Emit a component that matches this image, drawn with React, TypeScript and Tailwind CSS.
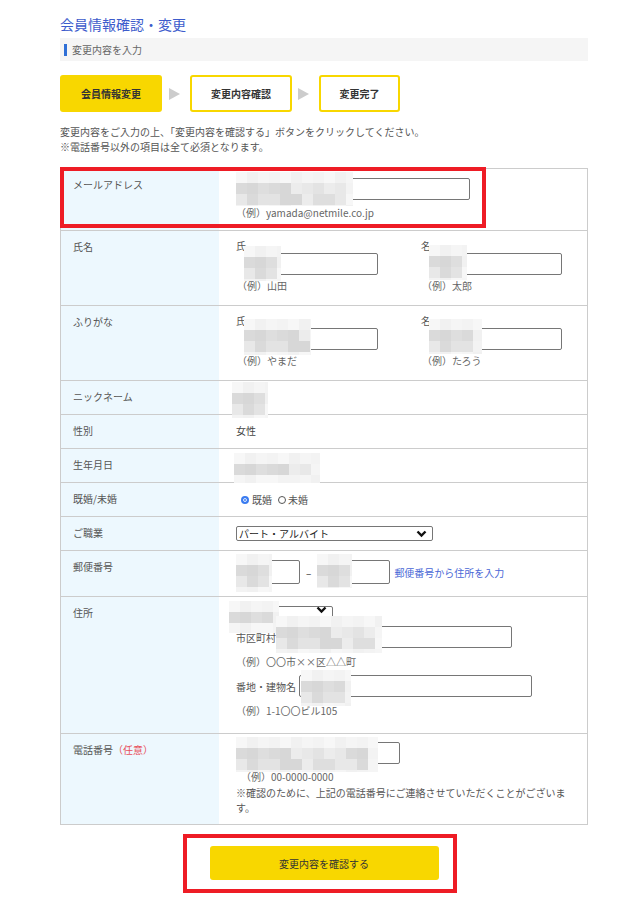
import React from "react";

const FONT = { fontFamily: '"Noto Sans CJK JP", "Noto Sans", sans-serif' };

// pixelated blur over personal values
function Mosaic({ w, h, className }: { w: number; h: number; className: string }) {
  const cell = 11;
  const cols = Math.ceil(w / cell);
  const rows = Math.ceil(h / cell);
  const light = ["#f7f7f7", "#f3f3f3", "#f5f5f5", "#f1f1f1"];
  const dark = ["#e3e3e3", "#dadada", "#e8e8e8", "#dedede", "#ececec", "#d7d7d7"];
  const rects = [];
  for (let r = 0; r < rows; r++) {
    for (let c = 0; c < cols; c++) {
      const mid = r > 0 && r < rows - 1 && c < cols - 1;
      const pal = mid ? dark : light;
      const fill = pal[(r * 7 + c * 3 + ((c * r) % 5)) % pal.length];
      rects.push(<rect key={r + "-" + c} x={c * cell} y={r * cell} width={cell} height={cell} fill={fill} />);
    }
  }
  return (
    <svg width={w} height={h} className={"absolute pointer-events-none " + className}>
      {rects}
    </svg>
  );
}

function Input({ className }: { className: string }) {
  return <div className={"border border-[#767676] rounded-[2px] bg-white " + className} />;
}

function Chevron() {
  return (
    <svg width="11" height="8" viewBox="0 0 11 8">
      <path d="M1.5 1.5 L5.5 5.5 L9.5 1.5" fill="none" stroke="#111" strokeWidth="2.4" />
    </svg>
  );
}

function Arrow() {
  return (
    <svg width="11" height="12" viewBox="0 0 11 12" className="shrink-0">
      <path d="M0 0 L11 6 L0 12 Z" fill="#cccccc" />
    </svg>
  );
}

function Row({ label, children, className }: { label: React.ReactNode; children: React.ReactNode; className: string }) {
  return (
    <div className="flex border-t border-[#cccccc]">
      <div className="w-[158px] shrink-0 bg-[#edf8fe] pl-[12px] pt-[8px] text-[10px] leading-[15px] text-[#555]">{label}</div>
      <div className={"flex-1 pl-[17px] pr-[16px] text-[10px] leading-[15px] text-[#555] " + className}>{children}</div>
    </div>
  );
}

function Ex({ children, className }: { children: React.ReactNode; className: string }) {
  return <p className={"text-[10px] leading-[15px] text-[#666] " + className}>{children}</p>;
}

export default function App() {
  return (
    <div style={FONT} className="relative w-[625px] min-h-[897px] bg-white">
      <div className="ml-[60px] w-[528px] pt-[14px]">
        <h1 className="text-[14px] leading-[20px] text-[#3d5ccc]">会員情報確認・変更</h1>

        <div className="mt-[4px] h-[23px] bg-[#f5f5f5] flex items-center pl-[4px]">
          <span className="w-[3px] h-[12px] bg-[#2f6fd6]" />
          <span className="ml-[5px] text-[10px] text-[#666]">変更内容を入力</span>
        </div>

        {/* steps */}
        <div className="mt-[14px] flex items-center">
          <div className="w-[102px] h-[37px] rounded-[3px] bg-[#f8d700] flex items-center justify-center text-[10px] font-bold text-[#333]">会員情報変更</div>
          <div className="mx-[7px] flex"><Arrow /></div>
          <div className="ml-[3px] w-[102px] h-[37px] rounded-[3px] border-2 border-[#f8d700] flex items-center justify-center text-[10px] font-bold text-[#333]">変更内容確認</div>
          <div className="mx-[6px] flex"><Arrow /></div>
          <div className="ml-[4px] w-[81px] h-[37px] rounded-[3px] border-2 border-[#f8d700] flex items-center justify-center text-[10px] font-bold text-[#333]">変更完了</div>
        </div>

        <div className="mt-[12px] text-[10px] leading-[15px] text-[#555]">
          <p>変更内容をご入力の上、「変更内容を確認する」ボタンをクリックしてください。</p>
          <p>※電話番号以外の項目は全て必須となります。</p>
        </div>

        {/* form table */}
        <div className="mt-[14px] border-x border-b border-[#cccccc]">
          <Row label="メールアドレス" className="pt-[9px] pb-[10px]">
            <div className="relative w-[234px]">
              <Input className="h-[22px]" />
              <Mosaic w={117} h={34} className="left-0 top-[-6px]" />
            </div>
            <Ex className="mt-[5px]">（例）yamada@netmile.co.jp</Ex>
          </Row>

          <Row label="氏名" className="pt-[7px] pb-[12px]">
            <div className="flex">
              <div className="w-[185px]">
                <p className="text-[#555]">氏</p>
                <div className="relative ml-[8px] w-[134px]">
                  <Input className="h-[22px]" />
                  <Mosaic w={37} h={35} className="left-0 top-[-7px]" />
                </div>
                <Ex className="mt-[3px] ml-[1px]">（例）山田</Ex>
              </div>
              <div>
                <p className="text-[#555]">名</p>
                <div className="relative ml-[8px] w-[133px]">
                  <Input className="h-[22px]" />
                  <Mosaic w={38} h={35} className="left-0 top-[-8px]" />
                </div>
                <Ex className="mt-[3px] ml-[1px]">（例）太郎</Ex>
              </div>
            </div>
          </Row>

          <Row label="ふりがな" className="pt-[7px] pb-[12px]">
            <div className="flex">
              <div className="w-[185px]">
                <p className="text-[#555]">氏</p>
                <div className="relative ml-[8px] w-[134px]">
                  <Input className="h-[22px]" />
                  <Mosaic w={67} h={36} className="left-0 top-[-9px]" />
                </div>
                <Ex className="mt-[3px] ml-[1px]">（例）やまだ</Ex>
              </div>
              <div>
                <p className="text-[#555]">名</p>
                <div className="relative ml-[8px] w-[133px]">
                  <Input className="h-[22px]" />
                  <Mosaic w={53} h={35} className="left-0 top-[-9px]" />
                </div>
                <Ex className="mt-[3px] ml-[1px]">（例）たろう</Ex>
              </div>
            </div>
          </Row>

          <Row label="ニックネーム" className="h-[33px] relative">
            <Mosaic w={36} h={36} className="left-[13px] top-[1px]" />
          </Row>

          <Row label="性別" className="pt-[8px] pb-[10px]">
            <p className="text-[#444]">女性</p>
          </Row>

          <Row label="生年月日" className="h-[33px] relative">
            <Mosaic w={86} h={30} className="left-[15px] top-[4px]" />
          </Row>

          <Row label="既婚/未婚" className="h-[33px] flex items-center">
            <div className="flex items-center">
              <span className="ml-[5px] w-[8px] h-[8px] rounded-full border-[2px] border-[#3b7cf0] bg-[#3b7cf0] ring-1 ring-inset ring-white" />
              <span className="ml-[3px] text-[#555]">既婚</span>
              <span className="ml-[6px] w-[8px] h-[8px] rounded-full border border-[#555] bg-white" />
              <span className="ml-[2px] text-[#555]">未婚</span>
            </div>
          </Row>

          <Row label="ご職業" className="h-[33px] flex items-center">
            <div className="w-[197px] h-[15px] border border-[#767676] rounded-[2px] flex items-center justify-between pl-[2px] pr-[5px]">
              <span className="text-[10px] leading-[13px] text-[#222]">パート・アルバイト</span>
              <Chevron />
            </div>
          </Row>

          <Row label="郵便番号" className="pt-[9px] pb-[12px]">
            <div className="flex items-center">
              <div className="relative w-[64px]">
                <Input className="h-[24px]" />
                <Mosaic w={36} h={38} className="left-0 top-[-6px]" />
              </div>
              <span className="mx-[6px] text-[#333]">–</span>
              <div className="relative w-[73px]">
                <Input className="h-[24px]" />
                <Mosaic w={35} h={34} className="left-0 top-[-6px]" />
              </div>
              <span className="ml-[4px] text-[#4a67d6]">郵便番号から住所を入力</span>
            </div>
          </Row>

          <Row label="住所" className="pt-[9px] pb-[15px]">
            <div className="relative w-[97px] h-[14px] border border-[#767676] rounded-[2px] flex justify-end pr-[5px]">
              <span className="mt-[-1px]"><Chevron /></span>
              <Mosaic w={50} h={32} className="left-[-8px] top-[-6px]" />
            </div>
            <div className="mt-[6px] flex items-center">
              <span className="text-[#555]">市区町村</span>
              <div className="relative ml-[3px] w-[233px]">
                <Input className="h-[22px]" />
                <Mosaic w={106} h={37} className="left-[-3px] top-[-10px]" />
              </div>
            </div>
            <Ex className="mt-[6px]">（例）〇〇市××区△△町</Ex>
            <div className="mt-[6px] flex items-center">
              <span className="text-[#555]">番地・建物名</span>
              <div className="relative ml-[3px] w-[233px]">
                <Input className="h-[22px]" />
                <Mosaic w={50} h={36} className="left-[2px] top-[-5px]" />
              </div>
            </div>
            <Ex className="mt-[6px]">（例）1-1〇〇ビル105</Ex>
          </Row>

          <Row
            label={
              <span>
                電話番号<span className="text-[#e8505b]">（任意）</span>
              </span>
            }
            className="pt-[8px] pb-[9px]"
          >
            <div className="relative w-[164px]">
              <Input className="h-[22px]" />
              <Mosaic w={142} h={35} className="left-0 top-[-5px]" />
            </div>
            <Ex className="mt-[5px] ml-[5px]">（例）00-0000-0000</Ex>
            <p className="mt-[1px] text-[#555]">※確認のために、上記の電話番号にご連絡させていただくことがございます。</p>
          </Row>
        </div>

        <div className="mt-[21px] flex justify-center pb-[18px]">
          <button className="w-[229px] h-[34px] rounded-[3px] bg-[#f8d700] text-[10px] text-[#333]">変更内容を確認する</button>
        </div>
      </div>

      {/* red annotation frames */}
      <div className="absolute left-[60px] top-[167px] w-[426px] h-[61px] border-[4px] border-[#ee1c25]" />
      <div className="absolute left-[183px] top-[834px] w-[274px] h-[59px] border-[4px] border-[#ee1c25]" />
    </div>
  );
}
